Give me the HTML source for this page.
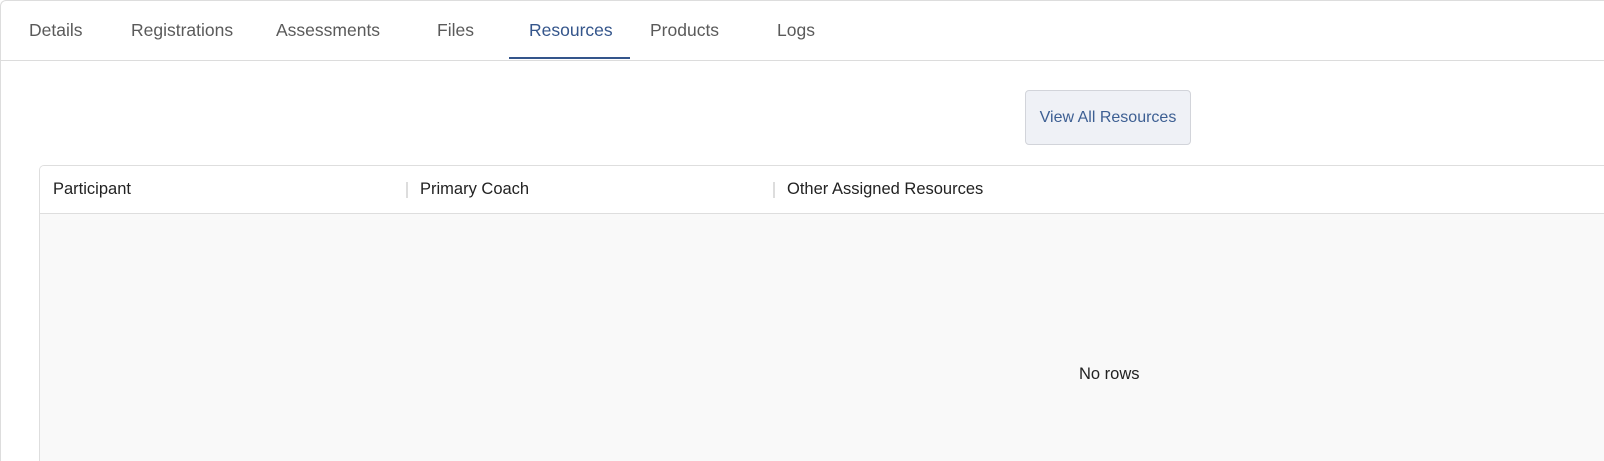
<!DOCTYPE html>
<html style="margin:0;width:1604px;height:461px;overflow:hidden"><head><style>
body{margin:0;width:1604px;height:461px;overflow:hidden;background:#fff;font-family:"Liberation Sans",sans-serif;position:relative}
.frame{position:absolute;left:0;top:0;width:1604px;height:461px;border:1px solid #ddd;border-right:none;border-bottom:none;border-radius:6px 0 0 0;box-sizing:border-box}
.tabline{position:absolute;left:0;top:60px;width:1604px;height:1px;background:#dcdcdc}
.tab{position:absolute;top:20px;font-size:17.5px;color:#5a5a5a;line-height:20px}
.act{color:#34558b}
.ul{position:absolute;left:509px;top:57px;width:121px;height:2px;background:#34558b}
.btn{position:absolute;left:1025px;top:90px;width:166px;height:55px;box-sizing:border-box;border:1px solid #d2d4da;border-radius:4px;background:#eff1f6;color:#3d5f93;font-size:16px;line-height:53px;text-align:center}
.tbl{position:absolute;left:39px;top:165px;width:1565px;height:296px;border:1px solid #dedede;border-right:none;border-bottom:none;border-radius:5px 0 0 0;box-sizing:border-box;background:#f9f9f9;overflow:hidden}
.hd{position:absolute;left:0;top:0;right:0;height:47px;background:#fff;border-bottom:1px solid #dedede}
.h{position:absolute;top:14px;font-size:16.5px;color:#222;line-height:18px}
.sep{position:absolute;top:16px;width:2px;height:16px;background:#ddd}
.nr{position:absolute;left:1079px;top:365px;font-size:16.5px;color:#222;line-height:18px}
</style></head><body>
<div class="frame"></div>
<div class="tab" style="left:29px">Details</div>
<div class="tab" style="left:131px">Registrations</div>
<div class="tab" style="left:276px">Assessments</div>
<div class="tab" style="left:437px">Files</div>
<div class="tab act" style="left:529px">Resources</div>
<div class="tab" style="left:650px">Products</div>
<div class="tab" style="left:777px">Logs</div>
<div class="ul"></div>
<div class="tabline"></div>
<div class="btn">View All Resources</div>
<div class="tbl"><div class="hd">
<div class="h" style="left:13px">Participant</div>
<div class="sep" style="left:366px"></div>
<div class="h" style="left:380px">Primary Coach</div>
<div class="sep" style="left:733px"></div>
<div class="h" style="left:747px">Other Assigned Resources</div>
</div></div>
<div class="nr">No rows</div>
</body></html>
